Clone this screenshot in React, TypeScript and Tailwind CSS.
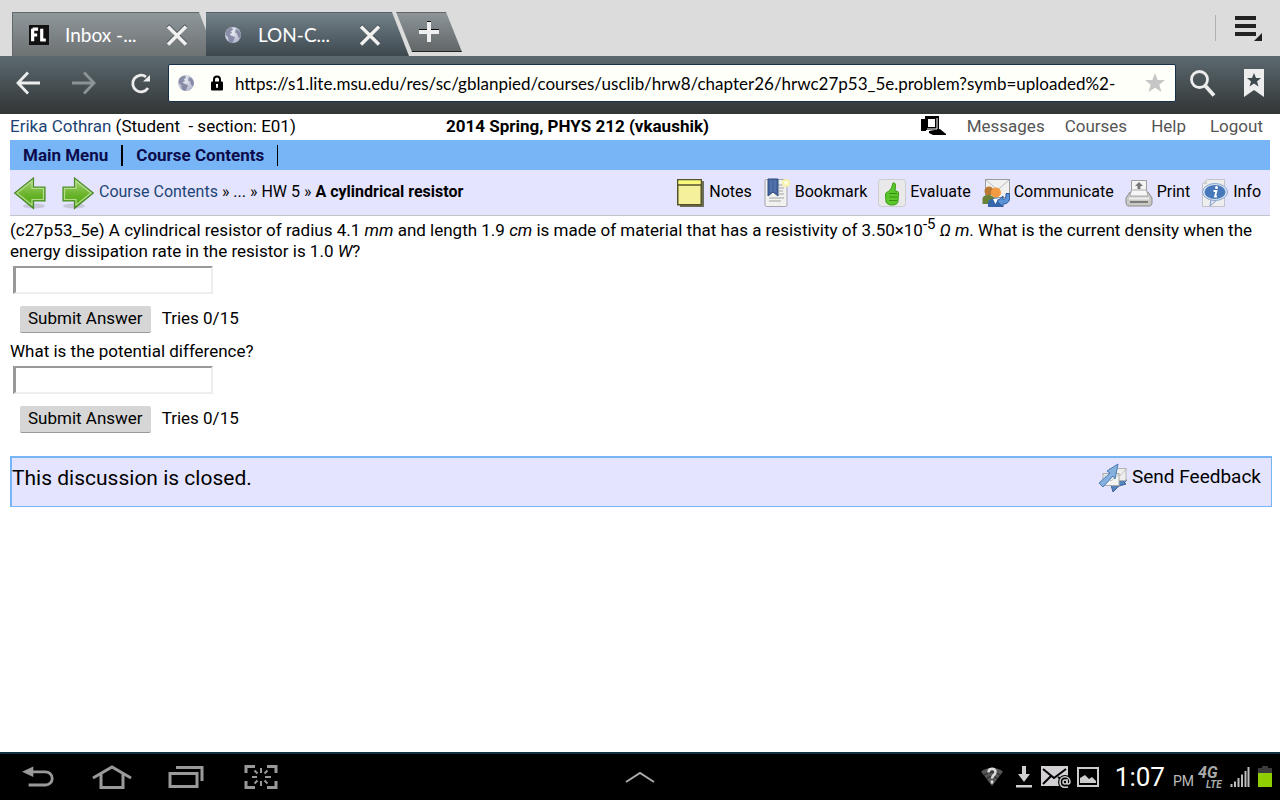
import React, { useState } from "react";

const PROBLEM_URL =
  "https://s1.lite.msu.edu/res/sc/gblanpied/courses/usclib/hrw8/chapter26/hrwc27p53_5e.problem?symb=uploaded%2-";

function GlobeIcon() {
  return (
    <svg width="18" height="18" viewBox="0 0 18 18">
      <defs>
        <radialGradient id="globe" cx="0.4" cy="0.3" r="0.8">
          <stop offset="0" stopColor="#eef0f6" />
          <stop offset="1" stopColor="#a9aec6" />
        </radialGradient>
      </defs>
      <circle cx="9" cy="9" r="8" fill="url(#globe)" />
      <path
        d="M2 5 4.500 2.500 8 1.500 9 4 7 5 8 7 5.500 8.500 8 10 11 11 10 14 8 17 5 15.500 4 11 1.500 9zM12 3l3 1.500 2 4-1 4-2-2-1-3-2-1z"
        fill="#757b98"
        opacity="0.8"
      />
    </svg>
  );
}

function CloseIcon() {
  return (
    <svg width="22" height="22" viewBox="0 0 22 22">
      <path d="M2 1.500 20 19.500M20 1.500 2 19.500" stroke="#3c4448" strokeWidth="3.500" />
      <path d="M2 2.500 20 20.500M20 2.500 2 20.500" stroke="#f0f0f0" strokeWidth="3.500" />
    </svg>
  );
}

function NavArrow({ flip, color }: { flip?: boolean; color: string }) {
  return (
    <svg
      width="24"
      height="24"
      viewBox="0 0 24 24"
      className={flip ? "rotate-180" : ""}
      fill="none"
      stroke={color}
      strokeWidth="2.800"
    >
      <path d="M12 1.500 2 12l10 10.500M2.500 12H24" />
    </svg>
  );
}

function ReloadIcon() {
  return (
    <svg width="22" height="22" viewBox="0 0 22 22">
      <path
        d="M16 4.800A8.300 8.300 0 1 0 18 16"
        fill="none"
        stroke="#ededed"
        strokeWidth="2.800"
      />
      <path d="M20 3v6.500h-7z" fill="#ededed" />
    </svg>
  );
}

function LockIcon() {
  return (
    <svg width="12" height="16" viewBox="0 0 12 16">
      <path d="M3 7V4.500a3 3 0 0 1 6 0V7" fill="none" stroke="#000" strokeWidth="2" />
      <rect y="6.500" width="12" height="9" rx="1" fill="#000" />
      <path d="M5 9h2v1.500L6.700 13H5.300L5 10.500z" fill="#fff" />
    </svg>
  );
}

function RemoteIcon() {
  return (
    <svg width="26" height="20" viewBox="0 0 26 20">
      <path d="M0 3h5v12H0z" />
      <path d="M4 0h14v14H4z" />
      <path d="M8 15l11-2 6 5v1H12l-4-2z" />
      <path d="M7 3h7v8H7z" fill="#fff" />
      <path d="M16 2v11H6" fill="none" stroke="#fff" />
    </svg>
  );
}

function GreenArrow({ flip }: { flip?: boolean }) {
  return (
    <svg width="32" height="34" viewBox="0 0 32 34" className={flip ? "-scale-x-100" : ""}>
      <defs>
        <linearGradient id="green" x1="0" y1="0" x2="0" y2="1">
          <stop offset="0" stopColor="#a9d67a" />
          <stop offset="0.550" stopColor="#69b32a" />
          <stop offset="1" stopColor="#45a60c" />
        </linearGradient>
      </defs>
      <ellipse cx="20" cy="30" rx="11" ry="2.500" fill="#b9bac9" opacity="0.700" />
      <path
        d="M.7 17 19.500 2v9H31v14H19.500v7.500z"
        fill="url(#green)"
        stroke="#4b8a2c"
        strokeWidth="1.200"
      />
      <path
        d="M3 17 18 5v7.500h11.500v11H18V29z"
        fill="none"
        stroke="#b5dc8d"
        strokeWidth="1.200"
      />
    </svg>
  );
}

function NotesIcon() {
  return (
    <svg width="28" height="30" viewBox="0 0 28 30">
      <path d="M3 3h24v26H3z" fill="#6e6e5c" />
      <path d="M.750 1.750h23.500v25H.750z" fill="#f5f09b" stroke="#55532a" strokeWidth="1.500" />
      <path d="M1.500 2.500h22V6h-22z" fill="#fbf97a" />
      <path d="M1 7h23" stroke="#55532a" strokeWidth="1.500" />
    </svg>
  );
}

function BookmarkIcon() {
  return (
    <svg width="28" height="30" viewBox="0 0 28 30">
      <rect x="2" y="1.500" width="22" height="27" rx="1.500" fill="#f1f1f0" stroke="#a5a5ab" />
      <path d="M15 7h5M16 10h5M16 13h4M16 16h5M6 20h15M6 23h12" stroke="#a2a2a2" />
      <path d="M5 1h10v17l-5-4-5 4z" fill="#45669f" stroke="#2e4a7d" />
      <path d="M8 2v12M12 2v12" stroke="#5c7cb3" />
      <circle cx="23" cy="5" r="4" fill="#f7f3a8" />
      <circle cx="23" cy="5" r="2" fill="#fffde0" />
    </svg>
  );
}

function EvaluateIcon() {
  return (
    <svg width="28" height="30" viewBox="0 0 28 30">
      <rect x=".5" y="1.500" width="27" height="27" rx="3" fill="#e9e9e9" stroke="#cccccf" />
      <path
        d="M15 5c2-.5 3 1 2.500 3.500L17 13c3 0 4 1 3.500 3l-.5 7c0 3-3 4-6 4s-5-1-6-3l-.5-7c0-2 1-3 3-3.500L13.500 10z"
        fill="#5cc72c"
        stroke="#3a9a14"
      />
      <path d="M11 15.500h8M11 19h8M11 22.500h8" stroke="#369010" strokeWidth="1.200" />
    </svg>
  );
}

function CommunicateIcon() {
  return (
    <svg width="28" height="30" viewBox="0 0 28 30">
      <rect x="3.500" y="1.500" width="24" height="18" fill="#f0f0ef" stroke="#9a9a9e" />
      <path d="m4 2 11.500 10L27 2" fill="none" stroke="#bcbcbc" />
      <circle cx="7" cy="13" r="4.500" fill="#b97931" />
      <path d="M.5 26v-5c0-3 3-4 6-4s5 1 6 4v5z" fill="#688338" />
      <circle cx="14" cy="14.500" r="5" fill="#f29b42" />
      <path d="M6 29v-4c0-3 3-4.500 7-4.500s6 2 7 4.500v4z" fill="#3566aa" />
      <path d="m11 21 2.500 5 2.500-5z" fill="#fff" />
      <path
        d="M15 23.500 21 18v3.500c2 0 3-1 3-6h3.500c1 7-1 10.500-6.500 10.500v3z"
        fill="#5a93d8"
        stroke="#2c5998"
      />
    </svg>
  );
}

function PrintIcon() {
  return (
    <svg width="28" height="30" viewBox="0 0 28 30">
      <path d="M6.500 2.500h15V17h-15z" fill="#f4f4f4" stroke="#9d9d9d" />
      <path d="m14 4 4 4h-2.500v3h-3V8H10z" fill="#777" />
      <path
        d="M5 14h18l4 6v4c0 3-1 4-3 4H4c-2 0-3-1-3-4v-4z"
        fill="#c9c9c6"
        stroke="#8b8b8b"
      />
      <path d="M6.500 12h15l1.500 6H5z" fill="#f6f6f6" stroke="#aaa" />
      <path d="M4 20.500h20" stroke="#eee" strokeWidth="2" />
      <path d="M5 24h18" stroke="#7c7c79" strokeWidth="2" />
    </svg>
  );
}

function InfoIcon() {
  return (
    <svg width="28" height="30" viewBox="0 0 28 30">
      <path d="M6 1.500h17.500v27h-22V6z" fill="#eeeeee" stroke="#c2c2c7" />
      <path d="M6 1.500V6H1.500z" fill="#d1d1d1" />
      <path d="m10 21-1 7 8-7z" fill="#dfe6f1" stroke="#829fc6" />
      <ellipse cx="14" cy="14" rx="12.500" ry="8.500" fill="#d8e2f0" stroke="#8ba8cc" />
      <ellipse cx="14" cy="14" rx="10.500" ry="7" fill="#4779ba" />
      <path d="M12.500 13h3l-1.500 5.500h2" fill="none" stroke="#fff" strokeWidth="1.800" />
      <circle cx="15.500" cy="9.500" r="1.500" fill="#fff" />
    </svg>
  );
}

function FeedbackIcon() {
  return (
    <svg width="30" height="30" viewBox="0 0 30 30">
      <path d="M24 17h5l-3 3 2 1-7 2-6 6-2-7z" fill="#5484bd" stroke="#3b6396" />
      <rect x="12" y="5.500" width="16" height="12" fill="#eeeeec" stroke="#b2b2b2" />
      <path d="m16 8 6 5 6-7" fill="none" stroke="#c2c2c2" />
      <rect x="5" y="10.500" width="16" height="12" fill="#f4f4f2" stroke="#aaaaaa" />
      <path d="m5 11 8 7 8-7" fill="none" stroke="#c2c2c2" />
      <path d="M20 1 9 8l3 2L1 20l4 4L15 13l2 3z" fill="#86b0de" stroke="#4a7bb4" />
    </svg>
  );
}

const tools = [
  { label: "Notes", icon: <NotesIcon /> },
  { label: "Bookmark", icon: <BookmarkIcon /> },
  { label: "Evaluate", icon: <EvaluateIcon /> },
  { label: "Communicate", icon: <CommunicateIcon /> },
  { label: "Print", icon: <PrintIcon /> },
  { label: "Info", icon: <InfoIcon /> },
];

function BrowserTabs() {
  return (
    <div className="flex h-14 items-end bg-[#dcdcdc] pl-3 text-[19px] text-white">
      <div className="flex h-11 w-[204px] items-center border-t border-l border-[#62696c] bg-linear-to-b from-[#8f979b] to-[#6d7273] pl-4 [clip-path:polygon(0_0,187px_0,100%_100%,0_100%)]">
        <svg width="20" height="20" viewBox="0 0 22 22">
          <rect width="22" height="22" fill="#111" />
          <path
            d="M4 18V4M4 4.500h6M4 11h5M14 4v14M12.500 16.500h6"
            stroke="#fff"
            strokeWidth="3.500"
            fill="none"
          />
        </svg>
        <span className="w-[94px] pl-4">Inbox -...</span>
        <button aria-label="Close Inbox tab" className="ml-[23px]">
          <CloseIcon />
        </button>
      </div>
      <div className="-ml-[10px] flex h-11 w-[203px] items-center border-t border-[#56626a] bg-linear-to-b from-[#74828a] to-[#3d484e] pl-[18px] [clip-path:polygon(0_0,186px_0,100%_100%,0_100%)]">
        <GlobeIcon />
        <span className="w-[94px] pl-4">LON-C...</span>
        <button aria-label="Close LON-CAPA tab" className="ml-[23px]">
          <CloseIcon />
        </button>
      </div>
      <button
        aria-label="New tab"
        className="-ml-[13px] mb-1 flex h-10 w-[66px] items-center justify-center border-t border-b border-t-[#666] border-b-[#222] bg-linear-to-b from-[#8d9599] to-[#626768] [clip-path:polygon(0_0,50px_0,100%_100%,16px_100%)]"
      >
        <svg width="20" height="22" viewBox="0 0 20 22">
          <path d="M8 0h4v8h8v4H0V8h8z" fill="#111" />
          <path d="M8 1h4v8h8v4h-8v8H8v-8H0V9h8z" fill="#eee" />
        </svg>
      </button>
      <div className="ml-auto flex items-center self-start pt-[15px] pr-[17px]">
        <div className="h-[26px] w-px bg-[#b0b0b0]" />
        <button aria-label="Menu" className="ml-[19px]">
          <svg width="28" height="26" viewBox="0 0 28 26">
            <path d="M0 3h21M0 11h21M0 19h21" stroke="#222" strokeWidth="4" />
            <path d="M27 18v8h-8z" fill="#222" />
          </svg>
        </button>
      </div>
    </div>
  );
}

function AddressBar() {
  const [url, setUrl] = useState(PROBLEM_URL);

  return (
    <div className="flex h-[58px] items-center bg-linear-to-b from-[#5c6a70] to-[#323637] pr-4 pb-1 pl-4">
      <button aria-label="Back">
        <NavArrow color="#ededed" />
      </button>
      <button aria-label="Forward" className="ml-8">
        <NavArrow flip color="#8c9396" />
      </button>
      <button aria-label="Reload" className="ml-[34px]">
        <ReloadIcon />
      </button>
      <div className="ml-4 flex h-[38px] min-w-0 flex-1 items-center rounded-xs border border-[#16304c] bg-[#fffffa] px-2">
        <GlobeIcon />
        <span className="ml-4">
          <LockIcon />
        </span>
        <input
          aria-label="Address"
          value={url}
          onChange={(e) => setUrl(e.target.value)}
          className="ml-3 min-w-0 flex-1 text-[17px] text-black outline-none"
        />
        <button aria-label="Add bookmark" className="mr-[2px] ml-1">
          <svg width="20" height="20" viewBox="0 0 20 20">
            <path
              d="m10 0 2.700 7H20l-5.700 4.700L16.500 19 10 14.800 3.500 19l2.200-7.300L0 7h7.300z"
              fill="#c6c6c6"
            />
          </svg>
        </button>
      </div>
      <button aria-label="Search" className="ml-[14px]">
        <svg width="26" height="28" viewBox="0 0 26 28">
          <circle cx="9.500" cy="10.500" r="8" fill="none" stroke="#ededed" strokeWidth="2.800" />
          <path d="m15.500 17 8.500 9.500" stroke="#ededed" strokeWidth="3.800" />
        </svg>
      </button>
      <button aria-label="Bookmarks" className="ml-7">
        <svg width="20" height="28" viewBox="0 0 20 28">
          <path d="M0 0h20v28l-10-7-10 7z" fill="#ededed" />
          <path
            d="m10 4 2 5h5l-4 3.500 1.500 5-4.500-3-4.500 3 1.500-5L3 9h5z"
            fill="#3f4a4f"
          />
        </svg>
      </button>
    </div>
  );
}

function AnswerForm({ id, label }: { id: string; label: string }) {
  return (
    <form onSubmit={(e) => e.preventDefault()}>
      <input
        id={id}
        aria-label={label}
        className="ml-[3px] block h-7 w-[200px] border-2 border-l-3 border-t-[#999] border-r-[#eee] border-b-[#eee] border-l-[#999] px-1 outline-none"
      />
      <div className="mt-3 flex pl-[10px]">
        <button className="h-[27px] rounded-xs border-b border-[#999] bg-[#d6d6d6] px-2 pb-[2px]">
          Submit Answer
        </button>
        <span className="ml-[11px] pt-[2px]">Tries 0/15</span>
      </div>
    </form>
  );
}

function SystemBar() {
  return (
    <footer className="flex h-12 items-center border-t-2 border-[#12303f] bg-black px-2 text-white">
      <div className="flex flex-1 items-center gap-9">
        <button aria-label="System back" className="ml-[14px]">
          <svg width="34" height="24" viewBox="0 0 36 24" fill="none">
            <path d="M10 6.500h15a7 7 0 0 1 0 14H7" stroke="#999" strokeWidth="3" />
            <path d="M0 6.500 12 1v11z" fill="#999" />
          </svg>
        </button>
        <button aria-label="Home">
          <svg width="40" height="24" viewBox="0 0 40 24" fill="none">
            <path d="M1 13 20 2l19 11M9 9v13.500h22V9" stroke="#999" strokeWidth="3" />
          </svg>
        </button>
        <button aria-label="Recent apps">
          <svg width="36" height="24" viewBox="0 0 36 24" fill="none">
            <path d="M2 8.500h27v13H2zM8 2.500h26V16" stroke="#999" strokeWidth="3" />
          </svg>
        </button>
        <button aria-label="Screen capture" className="ml-1">
          <svg width="34" height="26" viewBox="0 0 34 26" fill="none" stroke="#999">
            <path d="M2 9V2.500h9M23 2.500h9V9M2 17v6.500h9M23 23.500h9V17" strokeWidth="3" />
            <path
              d="M17 4v5M17 17v5M8 13h5M21 13h6M10.500 6.500l3 3M23.500 6.500l-3 3M10.500 19.500l3-3M23.500 19.500l-3-3"
              strokeWidth="2"
            />
          </svg>
        </button>
      </div>
      <button aria-label="Open tray">
        <svg width="30" height="12" viewBox="0 0 30 12">
          <path d="M1 11 15 2l14 9" fill="none" stroke="#aaa" strokeWidth="2" />
        </svg>
      </button>
      <div className="flex flex-1 items-center justify-end">
        <svg width="24" height="20" viewBox="0 0 24 20">
          <path d="M1 4.500Q12-3 23 4.500L12 19z" fill="#555" />
          <path d="M4 8q8-6 16 0M6.500 11.500q5.500-4 11 0" fill="none" stroke="#222" />
          <path
            d="M8.500 5.500c0-5 7-5 7-.5 0 3-3.500 3-3.500 6.500M12 13.500v3"
            fill="none"
            stroke="#ddd"
            strokeWidth="2.500"
          />
        </svg>
        <svg width="16" height="22" viewBox="0 0 16 22" className="ml-3">
          <path d="M6 0h4v8h4l-6 8-6-8h4zM0 19h16v2.500H0z" fill="#d0d0d0" />
        </svg>
        <svg width="30" height="24" viewBox="0 0 30 24" className="ml-[9px]">
          <path d="M0 1h27v20H0z" fill="#d3d0d3" />
          <path d="m2 4 11 9L25 4M2 19l8-8M17 12l4 3" fill="none" stroke="#000" strokeWidth="2" />
          <circle cx="24" cy="17" r="7" fill="#000" />
          <circle cx="24" cy="17" r="2" fill="none" stroke="#ccc" strokeWidth="1.500" />
          <path
            d="M26 14v4c0 2 3 1 3-1 0-7-10-7-10 0 0 5 4 6 8 5"
            fill="none"
            stroke="#ccc"
            strokeWidth="1.500"
          />
        </svg>
        <svg width="22" height="20" viewBox="0 0 22 20" className="ml-[6px]">
          <rect x="1" y="1" width="20" height="18" fill="none" stroke="#ccc" strokeWidth="2" />
          <path d="M3 16v-5l5-3 4 4 3-2 4 4v2z" fill="#ccc" />
        </svg>
        <span className="ml-4 text-[26px]">1:07</span>
        <span className="ml-2 pt-2 text-sm text-[#bbb]">PM</span>
        <span className="ml-1 flex w-[28px] flex-col font-bold text-[#aaa] italic">
          <span className="text-base leading-4">4G</span>
          <span className="pl-2 text-[10px] leading-2">LTE</span>
        </span>
        <svg width="20" height="20" viewBox="0 0 20 20" className="ml-1">
          <path
            d="M1.500 20v-3M5 20v-5.500M8.500 20v-9M12 20V7.500M15.500 20V4M18.500 20V0"
            stroke="#bdbdbd"
            strokeWidth="2"
          />
        </svg>
        <svg width="14" height="22" viewBox="0 0 14 22" className="ml-2">
          <path d="M4 0h6v2h4v5H0V2h4z" fill="#3c3c3c" />
          <path d="M0 7h14v14H0z" fill="#8fce00" />
        </svg>
      </div>
    </footer>
  );
}

export default function App() {
  return (
    <div className="flex min-h-screen flex-col bg-white font-[Roboto,'Liberation_Sans',sans-serif] text-[17px] leading-[21px] text-black">
      <header className="font-[Lato,'Open_Sans',sans-serif]">
        <BrowserTabs />
        <AddressBar />
      </header>

      <main className="flex-1 pr-2 pl-[10px]">
        <div className="pr-[2px]">
          <div className="flex h-[26px] items-center pb-[2px]">
            <p className="min-w-[34.6%] whitespace-pre">
              <a href="#" className="text-[#1d4475]">
                Erika Cothran
              </a>
              {" (Student  - section: E01)"}
            </p>
            <h1 className="font-bold">2014 Spring, PHYS 212 (vkaushik)</h1>
            <nav className="ml-auto flex items-center gap-5 pr-[7px] text-[#555]">
              <a href="#" aria-label="Remote" className="text-black">
                <RemoteIcon />
              </a>
              <a href="#">Messages</a>
              <a href="#">Courses</a>
              <a href="#" className="px-1">
                Help
              </a>
              <a href="#">Logout</a>
            </nav>
          </div>

          <nav className="flex h-[30px] items-center bg-[#77b5f7] font-bold text-[#0c0c4c]">
            <a href="#" className="border-r-2 border-black px-[13px]">
              Main Menu
            </a>
            <a href="#" className="border-r border-black px-[13px]">
              Course Contents
            </a>
          </nav>

          <div className="flex h-[46px] items-center border-b border-[#c4c4c8] bg-[#e4e4ff] pl-1 text-base">
            <a href="#" aria-label="Previous">
              <GreenArrow />
            </a>
            <a href="#" aria-label="Next" className="ml-4">
              <GreenArrow flip />
            </a>
            <p className="ml-[5px] pb-[2px]">
              <a href="#" className="text-[#1d4475]">
                Course Contents
              </a>{" "}
              » ... » HW 5 » <b>A cylindrical resistor</b>
            </p>
            <div className="ml-auto flex gap-[11px] pr-[9px]">
              {tools.map((tool) => (
                <a key={tool.label} href="#" className="flex items-center gap-1">
                  {tool.icon}
                  <span className="pb-[2px]">{tool.label}</span>
                </a>
              ))}
            </div>
          </div>
        </div>

        <p className="pt-1">
          (c27p53_5e) A cylindrical resistor of radius 4.1 <i>mm</i> and length 1.9 <i>cm</i> is
          made of material that has a resistivity of 3.50×10
          <sup className="text-[15px]">-5</sup> <i>Ω m</i>. What is the current density when the
          energy dissipation rate in the resistor is 1.0 <i>W</i>?
        </p>
        <div className="pt-1">
          <AnswerForm id="current-density" label="Current density" />
        </div>
        <p className="pt-2 pb-1">What is the potential difference?</p>
        <AnswerForm id="potential-difference" label="Potential difference" />

        <section className="mt-[23px] flex h-[51px] justify-between border border-t-2 border-l-2 border-[#77b5f7] bg-[#e4e4ff] pt-1">
          <p className="text-[21px] leading-8">This discussion is closed.</p>
          <a href="#" className="flex h-8 items-center gap-1 pr-[10px] text-[19px]">
            <FeedbackIcon />
            <span className="pb-1">Send Feedback</span>
          </a>
        </section>
      </main>

      <SystemBar />
    </div>
  );
}
